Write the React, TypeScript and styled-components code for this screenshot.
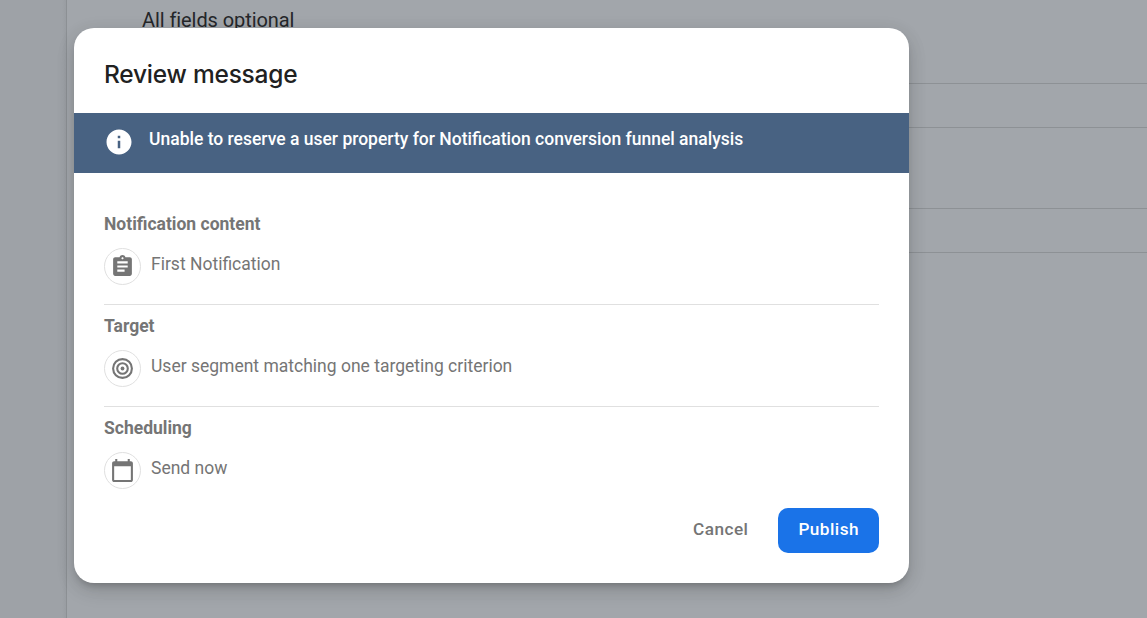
import React from "react";
import styled, { createGlobalStyle } from "styled-components";
import { MdAssignment, MdCalendarToday, MdInfo } from "react-icons/md";

const GlobalStyle = createGlobalStyle`
  *, *::before, *::after { box-sizing: border-box; }
  body { margin: 0; overflow: hidden; font-family: Roboto, sans-serif; background: #a2a6ab; }
  h1, h2, h3, p { margin: 0; }
`;

const Screen = styled.div`
  position: relative;
  display: flex;
  width: 100%;
  height: 618px;
  overflow: hidden;
  background: #a2a6ab;
`;

const SideNav = styled.aside`
  flex: none;
  width: 67px;
  background: linear-gradient(90deg, #9ea2a7 0, #9ea2a7 62px, #999da2 66px);
  border-right: 1px solid #8c9094;
`;

const Page = styled.main`
  flex: 1;
  display: flex;
  flex-direction: column;
  padding-left: 75px;
`;

const PageHint = styled.p`
  height: 83px;
  padding-top: 8px;
  font-size: 20px;
  line-height: 24px;
  letter-spacing: -0.08px;
  color: #25272a;
`;

const PageRow = styled.div<{ $height: number }>`
  height: ${(p) => p.$height}px;
  border-top: 1px solid #8d9195;
`;

const Dialog = styled.section`
  position: absolute;
  top: 28px;
  left: 74px;
  width: 835px;
  height: 555px;
  display: flex;
  flex-direction: column;
  background: #fff;
  border-radius: 20px;
  overflow: hidden;
  box-shadow: 0 5px 7px -3px rgba(0, 0, 0, 0.2), 0 8px 20px 0 rgba(0, 0, 0, 0.1),
    0 4px 20px 0 rgba(0, 0, 0, 0.08);
`;

const Title = styled.h1`
  height: 85px;
  padding: 29px 30px 0;
  font-family: Inter, sans-serif;
  font-size: 24.5px;
  line-height: 34px;
  font-weight: 500;
  letter-spacing: -0.23px;
  color: #212121;
`;

const Banner = styled.div`
  display: flex;
  gap: 15px;
  height: 60px;
  padding: 14px 30px 0;
  background: #486282;
  color: #fff;

  svg {
    flex: none;
  }
`;

const BannerText = styled.p`
  font-size: 17.5px;
  line-height: 24px;
  font-weight: 500;
`;

const Body = styled.div`
  padding: 30px 30px 0;
`;

const Section = styled.section<{ $last?: boolean }>`
  height: 102px;
  padding-top: 9px;
  border-bottom: ${(p) => (p.$last ? "none" : "1px solid #e0e0e0")};
`;

const SectionTitle = styled.h2`
  font-size: 17.5px;
  line-height: 24px;
  font-weight: 700;
  color: #757575;
`;

const SectionRow = styled.div`
  display: flex;
  gap: 10px;
  margin-top: 12px;
  color: #757575;
`;

const IconCircle = styled.span`
  flex: none;
  display: flex;
  align-items: center;
  justify-content: center;
  width: 37px;
  height: 37px;
  border: 1px solid #e0e0e0;
  border-radius: 50%;
`;

const Value = styled.p`
  padding-top: 4px;
  font-size: 17.5px;
  line-height: 24px;
`;

const Actions = styled.div`
  display: flex;
  justify-content: flex-end;
  padding: 0 30px;
  margin-top: -1px;
`;

const Button = styled.button<{ $primary?: boolean }>`
  height: 45px;
  padding: 0 20px 3px;
  margin-left: 10px;
  border: 0;
  border-radius: 10px;
  background: ${(p) => (p.$primary ? "#1a73e8" : "transparent")};
  color: ${(p) => (p.$primary ? "#fff" : "#757575")};
  font: 500 17.2px/24px Roboto, sans-serif;
  letter-spacing: 0.46px;
`;

const TargetIcon = () => (
  <svg width="25" height="25" viewBox="0 0 25 25" fill="none" stroke="currentColor">
    <circle cx="12.5" cy="12.5" r="9.4" strokeWidth="2.1" />
    <circle cx="12.5" cy="12.5" r="5.3" strokeWidth="2.1" />
    <circle cx="12.5" cy="12.5" r="1.9" fill="currentColor" stroke="none" />
  </svg>
);

const sections = [
  { title: "Notification content", value: "First Notification", icon: <MdAssignment size={25} /> },
  { title: "Target", value: "User segment matching one targeting criterion", icon: <TargetIcon /> },
  { title: "Scheduling", value: "Send now", icon: <MdCalendarToday size={25} /> },
];

export default function App() {
  return (
    <Screen>
      <GlobalStyle />
      <SideNav />
      <Page>
        <PageHint>All fields optional</PageHint>
        <PageRow $height={44} />
        <PageRow $height={81} />
        <PageRow $height={44} />
        <PageRow $height={366} />
      </Page>
      <Dialog role="dialog" aria-label="Review message">
        <Title>Review message</Title>
        <Banner>
          <MdInfo size={30} />
          <BannerText>Unable to reserve a user property for Notification conversion funnel analysis</BannerText>
        </Banner>
        <Body>
          {sections.map((s, i) => (
            <Section key={s.title} $last={i === sections.length - 1}>
              <SectionTitle>{s.title}</SectionTitle>
              <SectionRow>
                <IconCircle>{s.icon}</IconCircle>
                <Value>{s.value}</Value>
              </SectionRow>
            </Section>
          ))}
        </Body>
        <Actions>
          <Button>Cancel</Button>
          <Button $primary>Publish</Button>
        </Actions>
      </Dialog>
    </Screen>
  );
}
